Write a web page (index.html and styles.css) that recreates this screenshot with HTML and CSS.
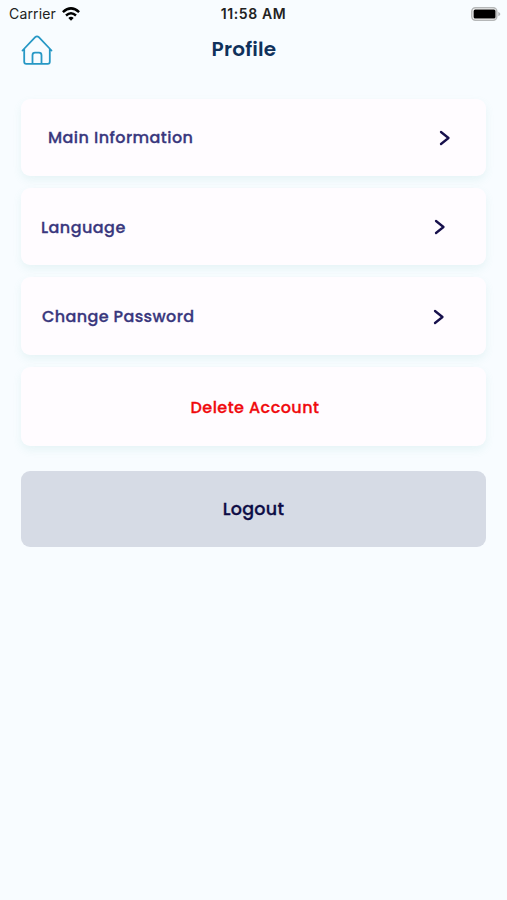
FILE: index.html
```html
<!DOCTYPE html>
<html lang="en">
<head>
<meta charset="utf-8">
<title>Profile</title>
<link rel="stylesheet" href="styles.css">
</head>
<body>
<div class="status">
  <div class="carrier"><span>Carrier</span>
    <svg width="18" height="14" viewBox="0 0 18 14" fill="none" stroke="#000" stroke-width="2.5"><path d="M.9 5.1Q9-2.4 17.1 5.1M4 8.5Q9 4.1 14 8.5"/><path d="M6.3 10.9Q9 8.5 11.7 10.9L9 13.7Z" fill="#000" stroke="none"/></svg>
  </div>
  <div class="time">11:58 AM</div>
  <svg class="battery" width="30" height="14" viewBox="0 0 30 14"><rect x=".8" y=".8" width="25" height="12.4" rx="3.6" fill="#fff" stroke="#b5b7b8" stroke-width="1.5"/><rect x="2.6" y="2.5" width="21.9" height="9" rx="1.5" fill="#000"/><path d="M27.3 4.7Q31.4 7 27.3 9.3Z" fill="#b0b3b5"/></svg>
</div>
<header class="header">
  <svg width="32" height="30" viewBox="0 0 32 30" fill="none" stroke="#2798c5" stroke-width="1.8" stroke-linecap="round" stroke-linejoin="round"><path d="M1.5 15.5 14.2 2.2Q16 .4 17.8 2.2L30.5 15.5M3.2 14V26.7Q3.2 28.8 5.3 28.8H26.7Q28.8 28.8 28.8 26.7V14M11.5 28.8V20.2Q11.5 17.7 14 17.7H18Q20.5 17.7 20.5 20.2V28.8"/></svg>
  <h1>Profile</h1>
</header>
<main>
  <div class="card main-info"><span>Main Information</span><svg class="chevron" viewBox="0 0 12 16"><path d="m2 2 7.5 6L2 14"/></svg></div>
  <div class="card language"><span>Language</span><svg class="chevron" viewBox="0 0 12 16"><path d="m2 2 7.5 6L2 14"/></svg></div>
  <div class="card password"><span>Change Password</span><svg class="chevron" viewBox="0 0 12 16"><path d="m2 2 7.5 6L2 14"/></svg></div>
  <div class="card delete"><span>Delete Account</span></div>
  <button class="logout"><span>Logout</span></button>
</main>
</body>
</html>
```
FILE: styles.css
```css
* { box-sizing: border-box; }
body { margin: 0; height: 900px; background: #f8fcff; font-family: Poppins, Inter, "Open Sans", sans-serif; }
svg { display: block; flex: none; }
.status { height: 27px; padding: 0 6px 0 9px; display: grid; grid-template-columns: 1fr auto 1fr; align-items: center; color: #222; font-family: Inter, sans-serif; font-size: 14px; }
.carrier { display: flex; align-items: center; gap: 6px; letter-spacing: .15px; }
.time { margin-left: -3px; font-weight: 600; letter-spacing: .6px; }
.battery { justify-self: end; }
.header { height: 72px; padding: 8px 21px 0; display: grid; grid-template-columns: 32px 1fr 32px; align-items: start; }
h1 { margin: 0; padding-right: 19px; text-align: center; color: #10315b; font-size: 20px; line-height: 28px; font-weight: 600; letter-spacing: .2px; }
main { padding: 0 21px; display: flex; flex-direction: column; }
.card { display: flex; align-items: center; justify-content: space-between; height: 77px; margin-bottom: 12px; border-radius: 9px; background: #fffcff; box-shadow: 0 4px 9px rgba(90, 180, 170, .11); color: #39377d; font-size: 16px; font-weight: 500; letter-spacing: .45px; -webkit-text-stroke: .3px currentColor; }
.main-info { padding: 0 35px 0 27px; }
.language { padding: 1px 40px 0 20px; }
.password { height: 78px; padding: 1px 41px 0 21px; }
.password span { letter-spacing: .38px; }
.delete { height: 79px; margin-bottom: 25px; padding: 2px 0 0 3px; justify-content: center; color: #f0090d; }
.chevron { width: 12px; height: 16px; fill: none; stroke: #17104c; stroke-width: 2.3; stroke-linecap: round; stroke-linejoin: round; }
.logout { height: 76px; padding: 0; border: 0; border-radius: 9px; background: #d6dbe5; color: #0d0c45; font: 500 17.5px Poppins, Inter, sans-serif; letter-spacing: .3px; -webkit-text-stroke: .3px currentColor; }
```
